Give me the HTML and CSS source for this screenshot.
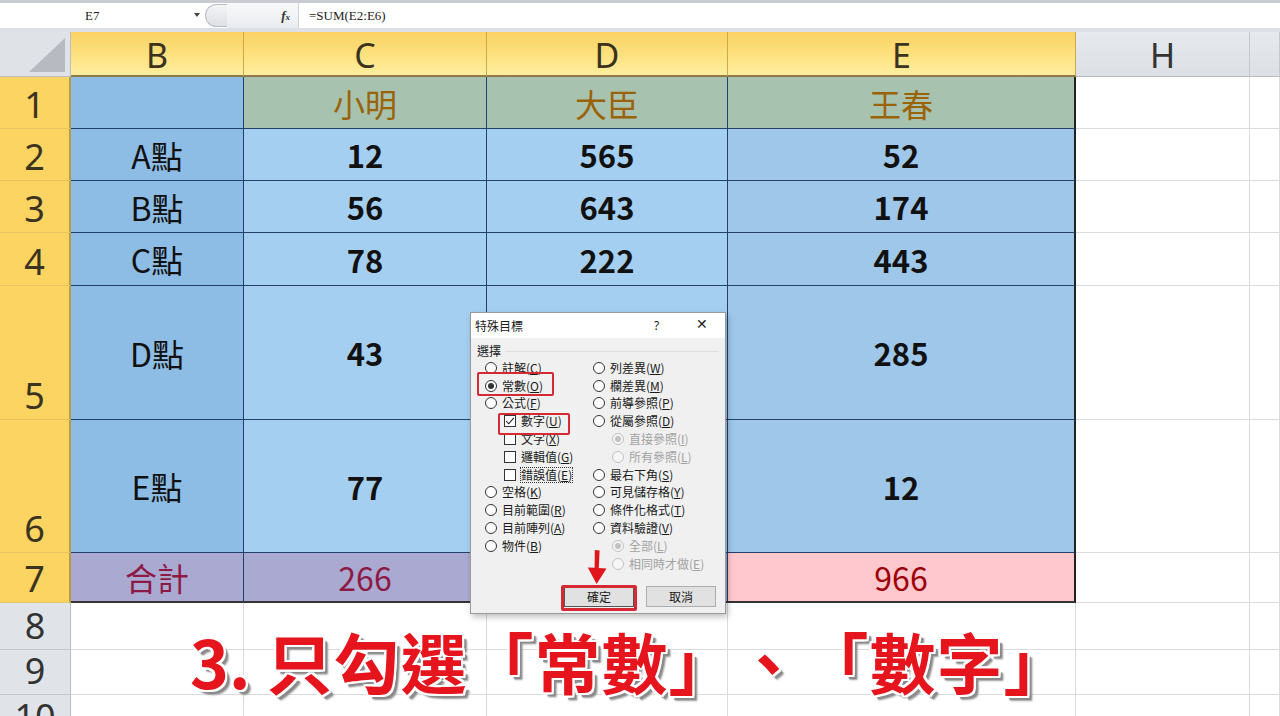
FILE: index.html
```html
<!DOCTYPE html>
<html lang="zh-Hant">
<head>
<meta charset="utf-8">
<title>特殊目標</title>
<link rel="stylesheet" href="styles.css">
</head>
<body>
<div class="app">
  <div class="fbar">
    <div class="namebox"><span class="nb-text">E7</span><span class="nb-arrow"></span></div>
    <div class="handle"></div>
    <div class="fx-area"><span class="fx">f<span class="fx-x">x</span></span></div>
    <div class="formula">=SUM(E2:E6)</div>
  </div>

  <div class="sheet">
    <div class="corner"><span class="tri"></span></div>
    <div class="ch">B</div>
    <div class="ch">C</div>
    <div class="ch">D</div>
    <div class="ch">E</div>
    <div class="ch g">H</div>
    <div class="ch g"></div>

    <div class="rh">1</div>
    <div class="c b"></div>
    <div class="c nm">小明</div>
    <div class="c nm">大臣</div>
    <div class="c nm e">王春</div>
    <div class="c w"></div>
    <div class="c w"></div>

    <div class="rh">2</div>
    <div class="c b">A點</div>
    <div class="c d">12</div>
    <div class="c d">565</div>
    <div class="c d e">52</div>
    <div class="c w"></div>
    <div class="c w"></div>

    <div class="rh">3</div>
    <div class="c b">B點</div>
    <div class="c d">56</div>
    <div class="c d">643</div>
    <div class="c d e">174</div>
    <div class="c w"></div>
    <div class="c w"></div>

    <div class="rh">4</div>
    <div class="c b">C點</div>
    <div class="c d">78</div>
    <div class="c d">222</div>
    <div class="c d e">443</div>
    <div class="c w"></div>
    <div class="c w"></div>

    <div class="rh">5</div>
    <div class="c b">D點</div>
    <div class="c d">43</div>
    <div class="c d"></div>
    <div class="c d e">285</div>
    <div class="c w"></div>
    <div class="c w"></div>

    <div class="rh">6</div>
    <div class="c b">E點</div>
    <div class="c d">77</div>
    <div class="c d"></div>
    <div class="c d e">12</div>
    <div class="c w"></div>
    <div class="c w"></div>

    <div class="rh">7</div>
    <div class="c tot">合計</div>
    <div class="c tot">266</div>
    <div class="c tot"></div>
    <div class="c pink e">966</div>
    <div class="c w"></div>
    <div class="c w"></div>

    <div class="rh g">8</div>
    <div class="c w"></div>
    <div class="c w"></div>
    <div class="c w"></div>
    <div class="c w"></div>
    <div class="c w"></div>
    <div class="c w"></div>

    <div class="rh g">9</div>
    <div class="c w"></div>
    <div class="c w"></div>
    <div class="c w"></div>
    <div class="c w"></div>
    <div class="c w"></div>
    <div class="c w"></div>

    <div class="rh g last">10</div>
    <div class="c w"></div>
    <div class="c w"></div>
    <div class="c w"></div>
    <div class="c w"></div>
    <div class="c w"></div>
    <div class="c w"></div>
  </div>

  <div class="dlg">
    <div class="dlg-title">
      <span class="dlg-name">特殊目標</span>
      <span class="dlg-q">?</span>
      <span class="dlg-x">✕</span>
    </div>
    <div class="dlg-body">
      <div class="grp"><span>選擇</span><span class="grp-line"></span></div>
      <div class="opts">
        <div class="col">
          <div class="it"><span class="rd"></span><span>註解(<u>C</u>)</span></div>
          <div class="it"><span class="rd on"></span><span>常數(<u>O</u>)</span></div>
          <div class="it"><span class="rd"></span><span>公式(<u>F</u>)</span></div>
          <div class="it sub"><span class="cb on"><svg viewBox="0 0 12 12" width="12" height="12"><path d="M2.2 6.2 L4.8 8.8 L9.8 2.8" fill="none" stroke="#222" stroke-width="1.1"/></svg></span><span>數字(<u>U</u>)</span></div>
          <div class="it sub"><span class="cb"></span><span>文字(<u>X</u>)</span></div>
          <div class="it sub"><span class="cb"></span><span>邏輯值(<u>G</u>)</span></div>
          <div class="it sub"><span class="cb"></span><span class="focus">錯誤值(<u>E</u>)</span></div>
          <div class="it"><span class="rd"></span><span>空格(<u>K</u>)</span></div>
          <div class="it"><span class="rd"></span><span>目前範圍(<u>R</u>)</span></div>
          <div class="it"><span class="rd"></span><span>目前陣列(<u>A</u>)</span></div>
          <div class="it"><span class="rd"></span><span>物件(<u>B</u>)</span></div>
        </div>
        <div class="col">
          <div class="it"><span class="rd"></span><span>列差異(<u>W</u>)</span></div>
          <div class="it"><span class="rd"></span><span>欄差異(<u>M</u>)</span></div>
          <div class="it"><span class="rd"></span><span>前導參照(<u>P</u>)</span></div>
          <div class="it"><span class="rd"></span><span>從屬參照(<u>D</u>)</span></div>
          <div class="it sub dis"><span class="rd on"></span><span>直接參照(<u>I</u>)</span></div>
          <div class="it sub dis"><span class="rd"></span><span>所有參照(<u>L</u>)</span></div>
          <div class="it"><span class="rd"></span><span>最右下角(<u>S</u>)</span></div>
          <div class="it"><span class="rd"></span><span>可見儲存格(<u>Y</u>)</span></div>
          <div class="it"><span class="rd"></span><span>條件化格式(<u>T</u>)</span></div>
          <div class="it"><span class="rd"></span><span>資料驗證(<u>V</u>)</span></div>
          <div class="it sub dis"><span class="rd on"></span><span>全部(<u>L</u>)</span></div>
          <div class="it sub dis"><span class="rd"></span><span>相同時才做(<u>E</u>)</span></div>
        </div>
      </div>
      <div class="btns">
        <span class="btn ok">確定</span>
        <span class="btn">取消</span>
      </div>
    </div>
    <span class="mark m1"></span>
    <span class="mark m2"></span>
    <span class="mark m3"></span>
    <svg class="arrow" viewBox="0 0 24 36" width="24" height="36"><path d="M9.8 1 L14.6 1.4 L13.8 19 L21.5 19.6 L11.6 35 L2.8 18.6 L9.6 18.8 Z" fill="#e0141b"/></svg>
  </div>

  <div class="caption"><span class="num">3.</span>只勾選「常數」、「數字」</div>
</div>
</body>
</html>
```
FILE: styles.css
```css
* { box-sizing: border-box; }
html, body { margin: 0; padding: 0; }
body {
  width: 1280px;
  height: 716px;
  overflow: hidden;
  background: #ffffff;
  font-family: "Noto Sans CJK TC", "Noto Sans", sans-serif;
}
.app { position: relative; width: 1280px; height: 716px; overflow: hidden; }

/* formula bar */
.fbar {
  height: 32px;
  display: flex;
  align-items: stretch;
  background: #ffffff;
  border-top: 3px solid #c8cbcf;
  border-bottom: 4px solid #dcdfe3;
  font-family: "Liberation Serif", serif;
  font-size: 13px;
  color: #222;
}
.namebox {
  width: 205px;
  display: flex;
  align-items: center;
  position: relative;
  padding-left: 85px;
}
.nb-arrow {
  position: absolute;
  left: 194px;
  top: 10px;
  width: 0; height: 0;
  border-left: 3px solid transparent;
  border-right: 3px solid transparent;
  border-top: 4px solid #444;
}
.handle {
  width: 22px;
  margin: 1px 0;
  border: 1px solid #b9bdc3;
  border-right: none;
  border-radius: 12px 0 0 12px;
  background: linear-gradient(#f4f5f7, #dde0e4);
}
.fx-area {
  width: 72px;
  display: flex;
  align-items: center;
  justify-content: flex-end;
  padding-right: 8px;
  background: linear-gradient(#f7f8fa, #e9ecef);
  border-right: 1px solid #d0d4d8;
}
.fx { font-style: italic; font-weight: bold; font-size: 13px; color: #333; }
.fx-x { font-size: 9px; }
.formula {
  flex: 1;
  display: flex;
  align-items: center;
  padding-left: 10px;
}

/* sheet */
.sheet {
  display: grid;
  grid-template-columns: 71px 173px 243px 241px 348px 174px 30px;
  grid-template-rows: 45px 52px 52px 52px 53px 134px 133px 50px 47px 45px 40px;
}
.corner {
  position: relative;
  background: #dfe3e8;
  border-right: 1px solid #b9bec5;
  border-bottom: 1px solid #b9bec5;
}
.tri {
  position: absolute;
  right: 5px; bottom: 4px;
  width: 0; height: 0;
  border-left: 36px solid transparent;
  border-bottom: 34px solid #b7bbc1;
}
.ch {
  display: flex;
  align-items: center;
  justify-content: center;
  font-family: "Noto Sans", "Open Sans", sans-serif;
  font-size: 34px;
  color: #3a3320;
  background: linear-gradient(#fbd265, #fde27f 55%, #ffeea1);
  border-right: 1px solid #cfa949;
  border-bottom: 2px solid #8e7a45;
  padding-top: 2px;
}
.ch.g {
  background: linear-gradient(#e6e9ed, #dcdfe4);
  color: #333;
  border-right: 1px solid #c5c9cf;
  border-bottom: 1px solid #b7bcc3;
}
.rh {
  display: flex;
  align-items: flex-end;
  justify-content: center;
  padding-bottom: 3px;
  font-family: "Noto Sans", "Open Sans", sans-serif;
  font-size: 36px;
  line-height: 40px;
  color: #3a3320;
  background: #fcd462;
  border-right: 2px solid #b89a45;
  border-bottom: 1px solid #e6c466;
}
.rh.g {
  background: #e0e4e9;
  color: #333;
  border-right: 1px solid #b9bec5;
  border-bottom: 1px solid #c4c8ce;
}
.rh.last { align-items: flex-start; padding-top: 2px; overflow: hidden; }
.c {
  display: flex;
  align-items: center;
  justify-content: center;
  font-family: "Noto Sans CJK TC", "Noto Sans", sans-serif;
  font-size: 32px;
  color: #111;
  border-right: 1px solid #22406a;
  border-bottom: 1px solid #22406a;
}
.c.b { background: #8dbde5; }
.c.nm { background: #a7c3af; color: #9a6308; }
.c.d { background: #a5cff0; font-weight: 700; font-size: 31px; }
.c.d.e { background: #9ec7ea; }
.c.tot {
  background: #a9a9d1;
  color: #8d1a45;
  border-bottom: 2px solid #333;
}
.c.pink {
  background: #ffc7ce;
  color: #9c0006;
  border-bottom: 2px solid #333;
}
.c.e { border-right: 2px solid #222; }
.c.w {
  background: #ffffff;
  border-right: 1px solid #d9dbde;
  border-bottom: 1px solid #d9dbde;
}

/* dialog */
.dlg {
  position: absolute;
  left: 470px;
  top: 312px;
  width: 256px;
  height: 302px;
  background: #f0f0f0;
  border: 1px solid #9a9a9a;
  box-shadow: 2px 3px 6px rgba(0,0,0,0.25);
  font-family: "Noto Sans CJK TC", sans-serif;
  font-size: 12px;
  color: #1a1a1a;
}
.dlg-title {
  height: 25px;
  background: #ffffff;
  display: flex;
  align-items: center;
  padding-left: 4px;
  position: relative;
}
.dlg-name { font-size: 12px; }
.dlg-q { position: absolute; left: 183px; top: 4px; font-size: 12px; font-family: "Noto Sans", sans-serif; }
.dlg-x { position: absolute; left: 225px; top: 3px; font-size: 14px; font-family: "DejaVu Sans", sans-serif; color: #222; }
.dlg-body { padding: 4px 0 0 0; }
.grp {
  height: 16px;
  display: flex;
  align-items: center;
  padding-left: 6px;
  gap: 4px;
}
.grp-line { flex: 1; height: 1px; background: #dcdcdc; margin-right: 6px; margin-top: 2px; }
.opts {
  display: flex;
  margin-top: 1px;
  height: 214px;
}
.col { display: flex; flex-direction: column; }
.col:first-child { width: 122px; padding-left: 14px; }
.col:last-child { padding-left: 0; }
.it {
  height: 17.8px;
  display: flex;
  align-items: center;
  gap: 5px;
  white-space: nowrap;
  line-height: 14px;
}
.it.sub { padding-left: 19px; }
.it.dis { color: #a2a2a2; }
.it u { text-underline-offset: 1px; }
.rd {
  width: 12px; height: 12px;
  border-radius: 50%;
  border: 1px solid #333;
  background: #fff;
  position: relative;
  flex: none;
}
.rd.on::after {
  content: "";
  position: absolute;
  left: 2px; top: 2px;
  width: 6px; height: 6px;
  border-radius: 50%;
  background: #333;
}
.dis .rd { border-color: #c2c2c2; background: #f6f6f6; }
.dis .rd.on::after { background: #c2c2c2; }
.cb {
  width: 12px; height: 12px;
  border: 1px solid #333;
  background: #fff;
  flex: none;
  display: flex;
}
.cb svg { margin: -1px; }
.focus { outline: 1px dotted #333; outline-offset: 0; }
.btns {
  display: flex;
  gap: 12px;
  padding-left: 93px;
  margin-top: 13px;
}
.btn {
  width: 70px;
  height: 21px;
  display: flex;
  align-items: center;
  justify-content: center;
  background: #e1e1e1;
  border: 1px solid #adadad;
  font-size: 12px;
}
.btn.ok { border-color: #555; }
.mark {
  position: absolute;
  border: 2px solid #d52a33;
  border-radius: 2px;
}
.m1 { left: 6px; top: 59px; width: 77px; height: 24px; }
.m2 { left: 27px; top: 100px; width: 72px; height: 22px; }
.m3 { left: 90px; top: 272px; width: 76px; height: 26px; border-width: 3px; }
.arrow { position: absolute; left: 114px; top: 236px; }

/* caption */
.caption {
  position: absolute;
  left: 190px;
  top: 627px;
  font-family: "Noto Sans CJK TC", sans-serif;
  font-weight: 700;
  font-size: 66px;
  line-height: 1;
  letter-spacing: 1px;
  text-spacing-trim: space-all;
  white-space: nowrap;
  color: #e6141c;
  text-shadow:
    2px 0 0 #fff, -2px 0 0 #fff, 0 2px 0 #fff, 0 -2px 0 #fff,
    2px 2px 0 #fff, -2px -2px 0 #fff, 2px -2px 0 #fff, -2px 2px 0 #fff,
    4px 4px 1px #8a8a8a, 5px 5px 2px #a0a0a0;
}
.caption .num {
  letter-spacing: 0;
  margin-right: 16px;
}
```
